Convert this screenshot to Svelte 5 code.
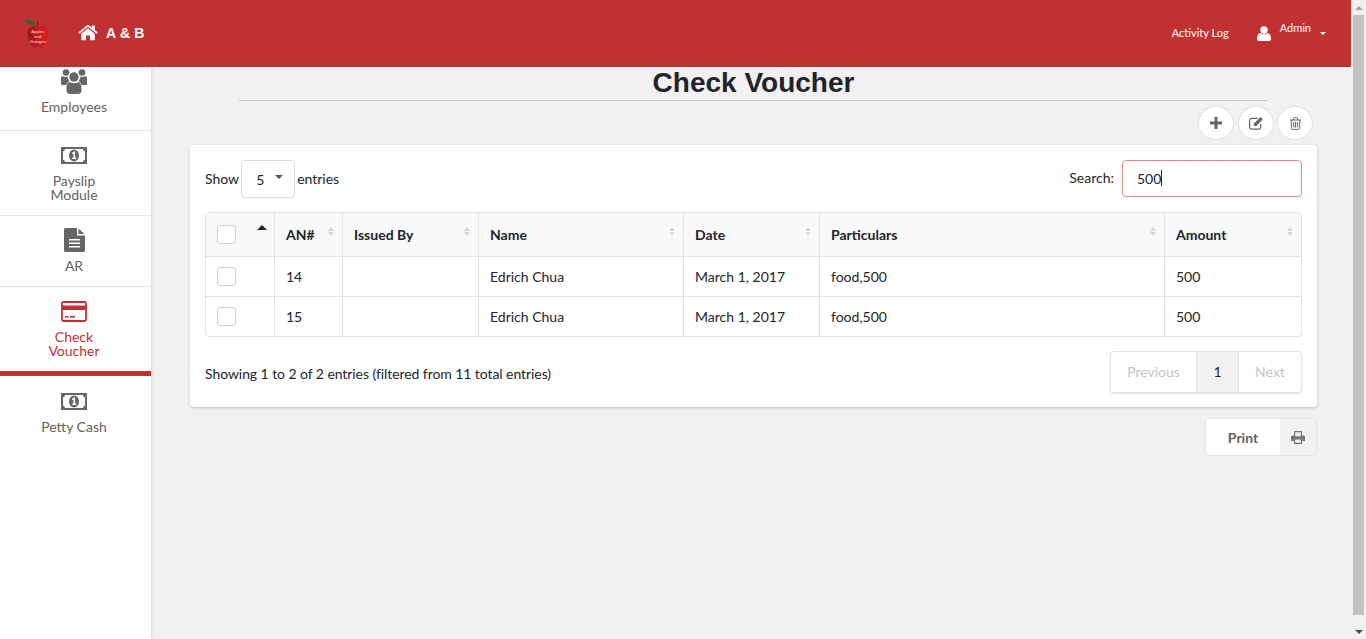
<script>
  const columns = [
    { label: 'AN#', width: 68 },
    { label: 'Issued By', width: 136 },
    { label: 'Name', width: 205 },
    { label: 'Date', width: 136 },
    { label: 'Particulars', width: 345 },
    { label: 'Amount', width: 137 }
  ];
  const rows = [
    { an: 14, by: '', name: 'Edrich Chua', date: 'March 1, 2017', particulars: 'food,500', amount: 500 },
    { an: 15, by: '', name: 'Edrich Chua', date: 'March 1, 2017', particulars: 'food,500', amount: 500 }
  ];
</script>

{#snippet money()}
  <svg class="nav-icon money" viewBox="0 0 26 17" aria-hidden="true">
    <path fill-rule="evenodd" d="M0 0h26v17H0zM4 2 Q4 4 2 4.500 V12.500 Q4 13 4 15 H22 Q22 13 24 12.500 V4.500 Q22 4 22 2z" fill="currentColor" />
    <ellipse cx="13" cy="8.500" rx="5" ry="6" fill="currentColor" />
    <path d="M11.300 6.500 L13.300 5.300 V11 M11.300 11.300 H15.200" fill="none" stroke="#fff" stroke-width="1.500" />
  </svg>
{/snippet}

<div class="shell">
  <div class="page">
    <header class="topbar">
      <div class="brand">
        <svg class="logo" viewBox="0 0 26 32" aria-hidden="true">
          <defs>
            <linearGradient id="apple" x1="0" x2="1" y1="0" y2="0">
              <stop offset="0" stop-color="#8f1a1c" />
              <stop offset="0.6" stop-color="#cf1c20" />
              <stop offset="1" stop-color="#e3171c" />
            </linearGradient>
          </defs>
          <path d="M14 9 C10 6 4 7 3 14 C2 22 7 32 11 32 C13 32 14 31 15 31 C17 32 18 32 20 31 C24 28 27 20 26 14 C25 7 18 6 14 9z" fill="url(#apple)" />
          <path d="M0 0 C1 5 6 7 13 7 C11 3 6 1 0 0z" fill="#17713a" />
          <path d="M14 9 L14.500 2" stroke="#5a2d1a" stroke-width="1.200" />
          <g class="logo-text">
            <text x="14.500" y="15">Apples</text>
            <text x="14.500" y="21">and</text>
            <text x="14.500" y="27">Oranges</text>
          </g>
        </svg>
        <a class="home" href="#top">
          <svg viewBox="0 0 20 17" aria-hidden="true">
            <path d="M10 4.200 3.200 9.800V15.500c0 .4.300.7.700.7H8V11.500h4v4.700h4.100c.4 0 .7-.3.700-.7V9.800z" fill="currentColor" />
            <path d="M.3 8.600 9.200 1.200c.5-.4 1.200-.4 1.700 0L14 3.800V1.400h2.800v4.700l3 2.500-1 1.200L10 2.700 1.300 9.800z" fill="currentColor" />
          </svg>
          <span>A &amp; B</span>
        </a>
      </div>
      <nav class="top-links">
        <a class="activity" href="#top">Activity Log</a>
        <a class="admin" href="#top">
          <svg viewBox="0 0 14 15" aria-hidden="true">
            <circle cx="7" cy="4" r="3.700" fill="currentColor" />
            <path d="M0 13c0-4 1.500-6 3.500-6 1 .8 2.200 1.200 3.500 1.200S9.500 7.800 10.500 7c2 0 3.500 2 3.500 6 0 1.300-1 2-2 2H2c-1 0-2-.7-2-2z" fill="currentColor" />
          </svg>
          <span class="admin-name">Admin</span>
          <i class="caret"></i>
        </a>
      </nav>
    </header>

    <div class="body">
      <aside class="sidebar">
        <a class="nav-item employees" href="#top">
          <svg class="nav-icon users" viewBox="0 0 26 25" aria-hidden="true">
            <g fill="currentColor">
              <circle cx="5" cy="3.500" r="3.300" />
              <circle cx="21" cy="3.500" r="3.300" />
              <circle cx="13" cy="8" r="4.700" />
              <path d="M0 9.500C0 8 1 7 2.500 7.500 4 8 5 8 6.500 7.500c.3 2 1 3.500 2 4.500-1.500 1-2.500 2-3 4H1.500C.5 16 0 15.500 0 14.500z" />
              <path d="M26 9.500C26 8 25 7 23.500 7.500 22 8 21 8 19.500 7.500c-.3 2-1 3.500-2 4.500 1.500 1 2.500 2 3 4h4c1 0 1.500-.5 1.500-1.500z" />
              <path d="M8.500 13c2.800 1.800 6.200 1.800 9 0 1.800.6 3 2.500 3 6v2.500c0 2-1.500 3.500-3.500 3.500H9c-2 0-3.500-1.500-3.500-3.500V19c0-3.500 1.200-5.400 3-6z" />
            </g>
          </svg>
          <span>Employees</span>
        </a>
        <a class="nav-item payslip" href="#top">
          {@render money()}
          <span>Payslip<br />Module</span>
        </a>
        <a class="nav-item ar" href="#top">
          <svg class="nav-icon file" viewBox="0 0 21 24" aria-hidden="true">
            <path fill-rule="evenodd" d="M1.500 0H13v7.500h8V22.500c0 .8-.7 1.500-1.500 1.500h-18C.7 24 0 23.300 0 22.500v-21C0 .7.700 0 1.500 0zM5 11v1.500h11V11zM5 14.500V16h11v-1.500zM5 18v1.500h11V18z" fill="currentColor" />
            <path d="M14.500 .5 20.500 6h-6z" fill="currentColor" />
          </svg>
          <span>AR</span>
        </a>
        <a class="nav-item check active" href="#top">
          <svg class="nav-icon card" viewBox="0 0 26 21" aria-hidden="true">
            <rect x="1" y="1" width="24" height="19" rx="1.500" fill="none" stroke="currentColor" stroke-width="1.800" />
            <rect x="1" y="4.500" width="24" height="4.500" fill="currentColor" />
            <rect x="4" y="15" width="3.500" height="1.600" fill="currentColor" />
            <rect x="9" y="15" width="5" height="1.600" fill="currentColor" />
          </svg>
          <span>Check<br />Voucher</span>
        </a>
        <a class="nav-item petty" href="#top">
          {@render money()}
          <span>Petty Cash</span>
        </a>
      </aside>

      <main class="content">
        <h1>Check Voucher</h1>
        <div class="actions">
          <button type="button" class="round add" aria-label="Add">
            <svg viewBox="0 0 12 12"><path d="M4.500 0h3v4.500H12v3H7.500V12h-3V7.500H0v-3h4.500z" fill="currentColor" /></svg>
          </button>
          <button type="button" class="round edit" aria-label="Edit">
            <svg viewBox="0 0 14 13">
              <path d="M11 7.500V10.500c0 1-.8 1.700-1.700 1.700H2.300C1.300 12.200.600 11.500.600 10.500V3.800c0-1 .7-1.700 1.700-1.700H8" fill="none" stroke="currentColor" stroke-width="1.100" />
              <path d="M4.500 7 10.800.8l2.200 2.200L6.800 9.200H4.500z" fill="currentColor" />
            </svg>
          </button>
          <button type="button" class="round" aria-label="Delete">
            <svg viewBox="0 0 12 13">
              <path d="M.5 3h11M4 3V1.500C4 1 4.300.6 4.800.6h2.400c.5 0 .8.400.8.900V3M1.800 3v8.300c0 .6.400 1.100 1 1.100h6.400c.6 0 1-.5 1-1.100V3M4.200 5v5.500M6 5v5.500M7.800 5v5.500" fill="none" stroke="currentColor" stroke-width="1" />
            </svg>
          </button>
        </div>

        <section class="card-panel">
          <div class="table-top">
            <div class="length">
              <span class="label">Show</span>
              <div class="select"><span>5</span><i class="caret dark"></i></div>
              <span class="label">entries</span>
            </div>
            <div class="search">
              <span class="label">Search:</span>
              <div class="search-input"><span>500</span><i class="cursor"></i></div>
            </div>
          </div>

          <div class="table-wrap">
            <table>
              <thead>
                <tr>
                  <th class="col-check">
                    <span class="check-box"></span>
                    <i class="sort-up"></i>
                  </th>
                  {#each columns as col}
                    <th style="width: {col.width}px">
                      {col.label}
                      <i class="sort-both"></i>
                    </th>
                  {/each}
                </tr>
              </thead>
              <tbody>
                {#each rows as row}
                  <tr>
                    <td class="col-check"><span class="check-box"></span></td>
                    <td>{row.an}</td>
                    <td>{row.by}</td>
                    <td>{row.name}</td>
                    <td>{row.date}</td>
                    <td>{row.particulars}</td>
                    <td>{row.amount}</td>
                  </tr>
                {/each}
              </tbody>
            </table>
          </div>

          <div class="table-bottom">
            <span class="info">Showing 1 to 2 of 2 entries (filtered from 11 total entries)</span>
            <div class="pager">
              <a class="disabled prev" href="#top">Previous</a>
              <a class="current" href="#top">1</a>
              <a class="disabled next" href="#top">Next</a>
            </div>
          </div>
        </section>

        <div class="print-row">
          <button type="button" class="print">
            <span class="print-label">Print</span>
            <span class="print-icon">
              <svg viewBox="0 0 14 13" aria-hidden="true">
                <path fill-rule="evenodd" d="M3 0h8v4.500h1.500c.8 0 1.500.7 1.500 1.500v4h-3v3H3v-3H0V6c0-.8.7-1.500 1.500-1.500H3zM4.200 1.200v4h5.600v-4zM4.200 8.500v3.300h5.600V8.500z" fill="currentColor" />
              </svg>
            </span>
          </button>
        </div>
      </main>
    </div>
  </div>

  <div class="scrollbar">
    <i class="arrow up"></i>
    <div class="thumb"></div>
    <i class="arrow down"></i>
  </div>
</div>

<style>
  :global(body) {
    margin: 0;
    overflow: hidden;
    font-family: Lato, 'Open Sans', sans-serif;
    font-size: 14px;
    color: #212529;
  }

  a {
    text-decoration: none;
    color: inherit;
  }

  .shell {
    display: flex;
    height: 639px;
  }

  .page {
    flex: 1;
    display: flex;
    flex-direction: column;
    min-width: 0;
    background: #f1f1f1;
  }

  .topbar {
    flex: 0 0 67px;
    box-sizing: border-box;
    padding-bottom: 2px;
    display: flex;
    align-items: center;
    justify-content: space-between;
    background: #c23131;
    color: #fff;
  }

  .brand {
    display: flex;
    align-items: center;
    padding-left: 25px;
  }

  .logo {
    width: 23px;
    height: 31px;
    margin-top: 1px;
  }

  .logo-text {
    fill: #f2b8ae;
    font-family: 'Liberation Sans', Arial, sans-serif;
    font-size: 4.500px;
    font-weight: 700;
    text-anchor: middle;
  }

  .home {
    display: flex;
    align-items: center;
    gap: 8px;
    margin-left: 30px;
    font-family: 'Liberation Sans', Arial, sans-serif;
    font-size: 14px;
    font-weight: 700;
    letter-spacing: 0.2px;
  }

  .home svg {
    width: 20px;
    height: 17px;
  }

  .top-links {
    display: flex;
    align-items: center;
    padding-right: 25px;
    font-size: 11px;
  }

  .activity {
    margin-right: 28px;
  }

  .admin {
    display: flex;
    align-items: center;
  }

  .admin svg {
    width: 14px;
    height: 15px;
    margin-right: 9px;
    position: relative;
    top: 1px;
  }

  .admin-name {
    position: relative;
    top: -5px;
  }

  .caret {
    display: inline-block;
    width: 0;
    height: 0;
    margin-left: 9px;
    position: relative;
    top: 1px;
    border-left: 3px solid transparent;
    border-right: 3px solid transparent;
    border-top: 3px solid #fff;
  }

  .caret.dark {
    margin-left: 11px;
    top: -2px;
    border-left-width: 4px;
    border-right-width: 4px;
    border-top: 4px solid #555;
  }

  .body {
    flex: 1;
    display: flex;
    min-height: 0;
  }

  .sidebar {
    flex: 0 0 151px;
    background: #fff;
    border-right: 1px solid #dfdfdf;
    box-shadow: 1px 0 2px rgba(0, 0, 0, 0.06);
    box-sizing: content-box;
    font-size: 14px;
    line-height: 14px;
    color: #66615b;
  }

  .nav-item {
    display: flex;
    flex-direction: column;
    align-items: center;
    box-sizing: border-box;
    padding-right: 3px;
    border-bottom: 1px solid #e6e6e6;
    color: #66615b;
    text-align: center;
  }

  .nav-icon {
    display: block;
    color: #666;
  }

  .money {
    width: 26px;
    height: 17px;
  }

  .employees {
    height: 64px;
    padding-top: 2px;
  }

  .users {
    width: 26px;
    height: 25px;
    margin-bottom: 6px;
  }

  .payslip {
    height: 85px;
    padding-top: 16px;
  }

  .payslip .money {
    margin-bottom: 10px;
  }

  .ar {
    height: 71px;
    padding-top: 12px;
  }

  .file {
    width: 21px;
    height: 24px;
    margin-bottom: 7px;
  }

  .check {
    height: 89px;
    padding-top: 14px;
    border-bottom: 5px solid #c23131;
    color: #c23131;
  }

  .check .nav-icon {
    color: #c23131;
  }

  .card {
    width: 26px;
    height: 21px;
    margin-bottom: 8px;
  }

  .petty {
    padding-top: 17px;
    border-bottom: none;
  }

  .petty .money {
    margin-bottom: 10px;
  }

  .content {
    flex: 0 0 1127px;
    margin-left: 38px;
    display: flex;
    flex-direction: column;
  }

  h1 {
    margin: 0 49px;
    height: 34px;
    box-sizing: border-box;
    border-bottom: 1px solid #c9c9c9;
    font-family: 'Liberation Sans', Arial, sans-serif;
    font-size: 28px;
    font-weight: 700;
    line-height: 31px;
    text-align: center;
    color: #212529;
  }

  .actions {
    display: flex;
    justify-content: flex-end;
    gap: 3px;
    margin-top: 5px;
    padding-right: 4px;
  }

  .round {
    display: flex;
    align-items: center;
    justify-content: center;
    width: 36px;
    height: 34px;
    padding: 0;
    background: #fff;
    border: 1px solid #e3e3e3;
    border-radius: 50%;
    color: #666;
  }

  .round.add {
    margin-right: 1px;
  }

  .round svg {
    width: 13px;
    height: 13px;
  }

  .round.add svg {
    width: 12px;
    height: 12px;
  }

  .round.edit svg {
    width: 15px;
    height: 14px;
  }

  .card-panel {
    margin-top: 5px;
    padding: 15px;
    height: 262px;
    box-sizing: border-box;
    background: #fff;
    border-radius: 4px;
    box-shadow: 0 1px 3px rgba(0, 0, 0, 0.22);
    font-size: 14px;
  }

  .table-top {
    display: flex;
    align-items: center;
    justify-content: space-between;
    height: 38px;
  }

  .label {
    padding-bottom: 2px;
  }

  .length {
    display: flex;
    align-items: center;
    gap: 2px;
  }

  .select {
    display: flex;
    align-items: center;
    box-sizing: border-box;
    width: 54px;
    height: 38px;
    padding-left: 14px;
    border: 1px solid #ddd;
    border-radius: 4px;
  }

  .search {
    display: flex;
    align-items: center;
    gap: 8px;
    position: relative;
    top: -1px;
  }

  .search-input {
    display: flex;
    align-items: center;
    box-sizing: border-box;
    width: 180px;
    height: 37px;
    padding-left: 14px;
    border: 1px solid #d98a8f;
    border-radius: 4px;
  }

  .cursor {
    width: 1px;
    height: 16px;
    background: #212529;
  }

  .table-wrap {
    margin-top: 14px;
    border: 1px solid #e2e2e2;
    border-radius: 4px;
    overflow: hidden;
  }

  table {
    width: 100%;
    border-collapse: collapse;
    table-layout: fixed;
  }

  th {
    position: relative;
    height: 43px;
    padding: 0 11.500px;
    box-sizing: border-box;
    background: #f8f9fa;
    border-right: 1px solid #e2e2e2;
    border-bottom: 1px solid #e2e2e2;
    font-weight: 700;
    text-align: left;
  }

  td {
    height: 40px;
    padding: 0 11.500px;
    box-sizing: border-box;
    border-right: 1px solid #e2e2e2;
    border-bottom: 1px solid #e2e2e2;
  }

  th:last-child,
  td:last-child {
    border-right: none;
  }

  tbody tr:last-child td {
    border-bottom: none;
  }

  th.col-check,
  td.col-check {
    width: 68px;
    padding-left: 11px;
  }

  .check-box {
    display: block;
    box-sizing: border-box;
    width: 19px;
    height: 19px;
    border: 1px solid #cfcfcf;
    border-radius: 3px;
    background: #fff;
  }

  .sort-up {
    position: absolute;
    top: 12px;
    right: 7px;
    border-left: 5px solid transparent;
    border-right: 5px solid transparent;
    border-bottom: 5px solid #212529;
  }

  .sort-both {
    position: absolute;
    top: 14px;
    right: 7px;
    width: 7px;
    height: 9px;
  }

  .sort-both::before,
  .sort-both::after {
    content: '';
    position: absolute;
    left: 0;
    border-left: 3.500px solid transparent;
    border-right: 3.500px solid transparent;
  }

  .sort-both::before {
    top: 0;
    border-bottom: 4px solid #d8d8d8;
  }

  .sort-both::after {
    bottom: 0;
    border-top: 4px solid #d8d8d8;
  }

  .table-bottom {
    display: flex;
    align-items: center;
    justify-content: space-between;
    margin-top: 14px;
  }

  .info {
    padding-top: 2px;
    letter-spacing: -0.07px;
  }

  .pager {
    display: flex;
    height: 42px;
    box-sizing: border-box;
    border: 1px solid #e3e3e3;
    border-radius: 4px;
    box-shadow: 0 1px 2px rgba(0, 0, 0, 0.12);
  }

  .pager a {
    display: flex;
    align-items: center;
    justify-content: center;
    padding-bottom: 1px;
    box-sizing: content-box;
  }

  .disabled {
    color: #c4c4c4;
  }

  .prev {
    width: 85px;
  }

  .current {
    width: 41px;
    background: #f1f1f1;
    border-left: 1px solid #e3e3e3;
    border-right: 1px solid #e3e3e3;
  }

  .next {
    width: 62px;
  }

  .print-row {
    display: flex;
    justify-content: flex-end;
    margin-top: 11px;
  }

  .print {
    display: flex;
    width: 112px;
    height: 38px;
    padding: 0;
    overflow: hidden;
    background: #fff;
    border: 1px solid #e3e3e3;
    border-radius: 4px;
    font-family: inherit;
    font-size: 14px;
    font-weight: 700;
    color: #66615b;
  }

  .print-label {
    flex: 0 0 74px;
    align-self: center;
  }

  .print-icon {
    flex: 1;
    display: flex;
    align-items: center;
    justify-content: center;
    height: 100%;
    background: #f1f1f1;
    color: #777;
  }

  .print-icon svg {
    width: 14px;
    height: 13px;
  }

  .scrollbar {
    flex: 0 0 15px;
    position: relative;
    background: #f1f1f1;
  }

  .thumb {
    position: absolute;
    top: 15px;
    left: 2px;
    right: 2px;
    bottom: 24px;
    background: #c1c1c1;
  }

  .arrow {
    position: absolute;
    left: 4px;
    border-left: 4px solid transparent;
    border-right: 4px solid transparent;
  }

  .arrow.up {
    top: 6px;
    border-bottom: 4px solid #a3a3a3;
  }

  .arrow.down {
    bottom: 5px;
    border-top: 4px solid #505050;
  }
</style>
